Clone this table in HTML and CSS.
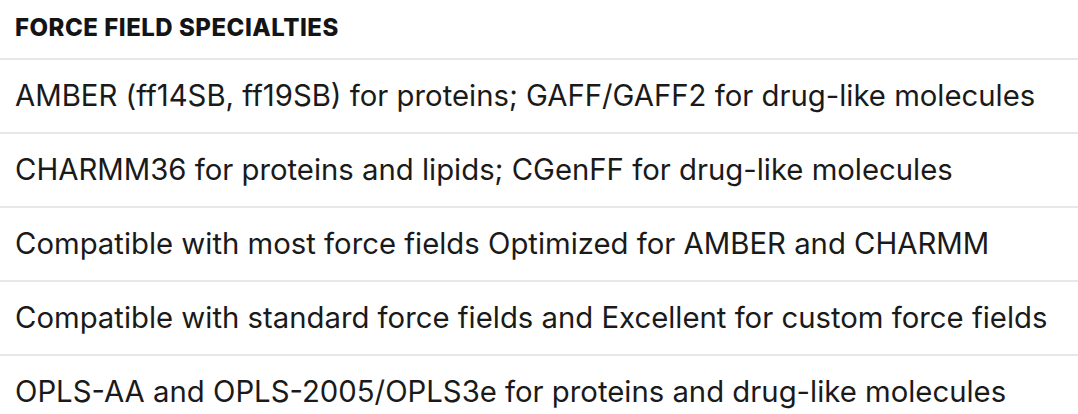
FILE: index.html
```html
<!DOCTYPE html>
<html lang="en">
<head>
<meta charset="utf-8">
<title>Force Field Specialties</title>
<link rel="stylesheet" href="styles.css">
</head>
<body>
<div class="spec-table" role="table">
  <div class="spec-head" role="columnheader">Force Field Specialties</div>
  <div class="spec-cell" role="cell">AMBER (ff14SB, ff19SB) for proteins; GAFF/GAFF2 for drug-like molecules</div>
  <div class="spec-cell" role="cell">CHARMM36 for proteins and lipids; CGenFF for drug-like molecules</div>
  <div class="spec-cell" role="cell">Compatible with most force fields Optimized for AMBER and CHARMM</div>
  <div class="spec-cell" role="cell">Compatible with standard force fields and Excellent for custom force fields</div>
  <div class="spec-cell" role="cell">OPLS-AA and OPLS-2005/OPLS3e for proteins and drug-like molecules</div>
</div>
</body>
</html>
```

FILE: styles.css
```css
html, body {
  margin: 0;
  padding: 0;
  background: #ffffff;
}

body {
  font-family: Inter, "Noto Sans", "Liberation Sans", sans-serif;
  color: #1a1a1a;
  overflow: hidden;
}

.spec-table {
  display: flex;
  flex-direction: column;
  width: 100%;
}

.spec-head {
  display: flex;
  align-items: center;
  height: 54px;
  padding: 0 15px 4px;
  font-size: 24px;
  font-weight: 800;
  text-transform: uppercase;
  letter-spacing: 0.5px;
  color: #141414;
  border-bottom: 2px solid #e8e8e8;
}

.spec-cell {
  display: flex;
  align-items: center;
  height: 72px;
  padding: 0 15px;
  font-size: 29.3px;
  font-weight: 400;
  line-height: 36px;
  border-bottom: 2px solid #e8e8e8;
  flex-shrink: 0;
}

.spec-cell:last-child {
  border-bottom: none;
}
```
